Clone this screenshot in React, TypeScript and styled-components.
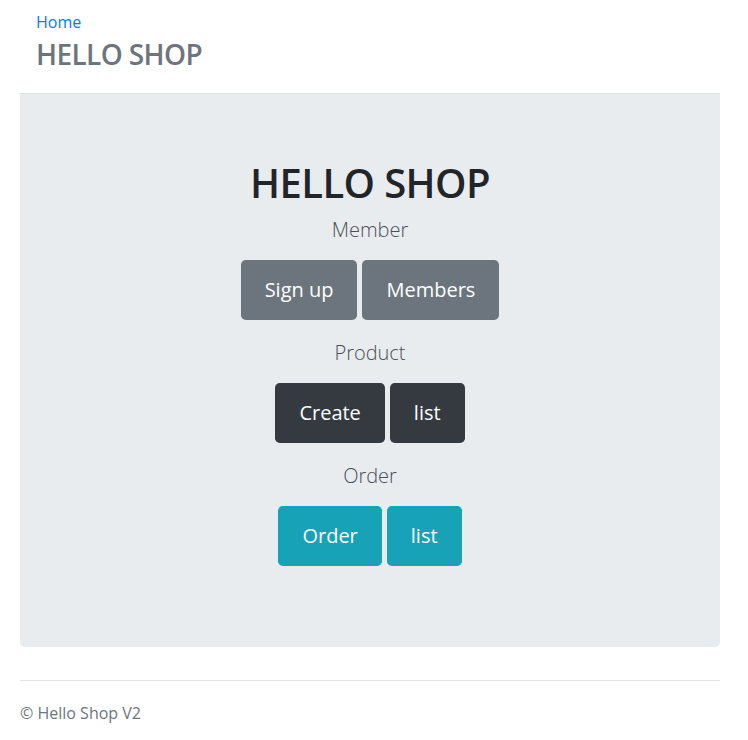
import React from "react";
import styled, { createGlobalStyle } from "styled-components";

const Global = createGlobalStyle`
  html, body { margin: 0; padding: 0; background: #fff; }
  body {
    font-family: "Open Sans", "Noto Sans", "Liberation Sans", sans-serif;
    font-size: 16px;
    line-height: 1.5;
    color: #212529;
  }
  * { box-sizing: border-box; }
`;

const Page = styled.div`
  padding: 0 28px 0 20px;
`;

const Header = styled.header`
  padding: 10px 16px 22px;
  border-bottom: 1px solid #dee2e6;
`;

const HomeLink = styled.a`
  display: block;
  color: #007bff;
  text-decoration: none;
  font-size: 16px;
  line-height: 24px;
`;

const HeaderTitle = styled.h3`
  margin: 3px 0 0;
  font-size: 28px;
  line-height: 34px;
  font-weight: 600;
  letter-spacing: -0.6px;
  color: #6c757d;
`;

const Jumbotron = styled.main`
  background: #e9ecef;
  border-radius: 0 0 4.8px 4.8px;
  padding: 65px 32px 65px;
  display: flex;
  flex-direction: column;
  align-items: center;
  text-align: center;
`;

const Title = styled.h1`
  margin: 0 0 8px;
  font-size: 40px;
  line-height: 48px;
  font-weight: 600;
  letter-spacing: -0.6px;
  color: #212529;
`;

const Lead = styled.p`
  margin: 0 0 15px;
  font-size: 20px;
  line-height: 30px;
  font-weight: 300;
  color: #495057;
`;

const ButtonRow = styled.div`
  display: flex;
  gap: 5px;
  justify-content: center;
  margin-bottom: 18px;
  &:last-child { margin-bottom: 16px; }
`;

const variants = {
  secondary: "#6c757d",
  dark: "#343a40",
  info: "#17a2b8",
};

const Button = styled.a<{ $variant: keyof typeof variants }>`
  display: inline-block;
  background: ${(p) => variants[p.$variant]};
  color: #fff;
  font-size: 20px;
  line-height: 30px;
  padding: 15px 24px;
  border-radius: 4.8px;
  text-decoration: none;
  cursor: pointer;
`;

const Footer = styled.footer`
  margin-top: 33px;
  border-top: 1px solid #e5e5e5;
  padding-top: 20px;
  color: #6c757d;
  font-size: 16px;
  line-height: 24px;
`;

export default function App() {
  return (
    <>
      <Global />
      <Page>
        <Header>
          <HomeLink href="#">Home</HomeLink>
          <HeaderTitle>HELLO SHOP</HeaderTitle>
        </Header>
        <Jumbotron>
          <Title>HELLO SHOP</Title>
          <Lead>Member</Lead>
          <ButtonRow>
            <Button $variant="secondary">Sign up</Button>
            <Button $variant="secondary">Members</Button>
          </ButtonRow>
          <Lead>Product</Lead>
          <ButtonRow>
            <Button $variant="dark">Create</Button>
            <Button $variant="dark">list</Button>
          </ButtonRow>
          <Lead>Order</Lead>
          <ButtonRow>
            <Button $variant="info">Order</Button>
            <Button $variant="info">list</Button>
          </ButtonRow>
        </Jumbotron>
        <Footer>© Hello Shop V2</Footer>
      </Page>
    </>
  );
}
